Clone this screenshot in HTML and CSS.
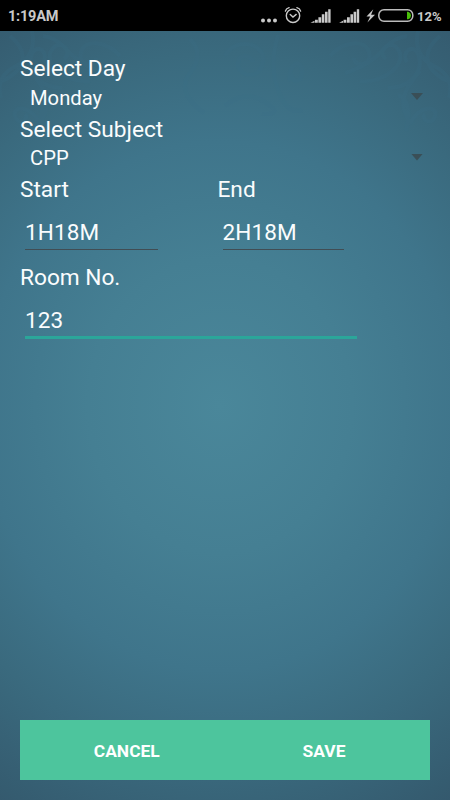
FILE: index.html
```html
<!DOCTYPE html>
<html lang="en">
<head>
<meta charset="utf-8">
<meta name="viewport" content="width=device-width, initial-scale=1">
<title>Timetable entry</title>
<link rel="stylesheet" href="styles.css">
</head>
<body>
<div class="screen">
  <header class="status">
    <span class="clock">1:19AM</span>
    <svg class="status-icons" viewBox="0 0 158 31" aria-hidden="true">
      <g fill="#c9c9c9">
        <circle cx="5" cy="20.5" r="2"/><circle cx="11" cy="20.5" r="2"/><circle cx="17" cy="20.5" r="2"/>
      </g>
      <g fill="none" stroke="#c9c9c9" stroke-width="1.4" stroke-linecap="round">
        <circle cx="35" cy="15.8" r="6.7"/>
        <path d="M32.2 14.4l2.8 2.6 3.2-2.6M27.4 11.1q.6-2.5 3.7-3.4M42.6 11.1q-.6-2.5-3.7-3.4"/>
      </g>
      <g fill="#c9c9c9">
        <path id="signal" d="M52.5 22.7l4-2v2zM57 19.8h2.8v2.9H57zM60.4 17.2h2.8v5.5h-2.8zM63.8 14.2h2.6v8.5h-2.6zM67 11.7h2.6v11H67zM70.2 9.3h2.4v13.4h-2.4z"/>
        <use href="#signal" x="28.6"/>
        <path d="M115.3 9.2l-6.8 7.4h3.7l-2.8 5.9 7.6-7.7h-3.9z"/>
      </g>
      <rect x="120.8" y="9.7" width="34" height="11.6" rx="5.2" fill="none" stroke="#bcbcbc" stroke-width="1.5"/>
      <path d="M149 11.8h1.3q2.7 1 2.7 3.7t-2.7 3.8H149z" fill="#49bf09"/>
    </svg>
    <span class="percent">12%</span>
  </header>
  <main class="content">
    <svg class="ornament" viewBox="0 0 450 130" aria-hidden="true">
      <g id="scroll" fill="none">
        <path d="M330 25c12-14 35-18 39-4s-15 16-15 6M345 42q25-8 37-22t25-15M360 50c24 2 46-16 39-30s-24 0-13 8M388 57c21 0 35-15 31-31s-19-5-12 5M418 0q-5 25 16 35t15 32M420 40c-18 20-22 35-10 51 M398 64q15 5 8 36M410 93c9-19 28-19 25-8s-15 3-10-2M440 5c-20 16-15 35 8 45"/>
      </g>
      <use href="#scroll" transform="translate(450) scale(-1 1)"/>
      <path fill="none" d="M225 25c8-18 40-15 38 5s-25 16-25 3 15-7 15-2M278 4q-9 30 0 55t24 20M290 50c-2-20 13-22 12-9s-11 10-10 2M225 75q20-17 40-4t-3 12M190 8q15 15 0 34t14 40"/>
    </svg>
    <form class="form">
      <div class="label">Select Day</div>
      <div class="spinner"><span>Monday</span><i class="arrow"></i></div>
      <div class="label">Select Subject</div>
      <div class="spinner"><span>CPP</span><i class="arrow"></i></div>
      <div class="times">
        <div class="start"><div class="label">Start</div><div class="field">1H18M</div></div>
        <div class="end"><div class="label">End</div><div class="field">2H18M</div></div>
      </div>
      <div class="room"><div class="label">Room No.</div><div class="field focused">123</div></div>
    </form>
    <footer class="actions"><span class="action cancel">CANCEL</span><span class="action save">SAVE</span></footer>
  </main>
</div>
</body>
</html>
```
FILE: styles.css
```css
* { box-sizing: border-box; }
body { margin: 0; font-family: Roboto, "Liberation Sans", sans-serif; color: #fafcfd; }
.screen { width: 450px; height: 800px; display: flex; flex-direction: column; overflow: hidden; }
.status { height: 31px; flex: none; display: flex; align-items: center; background: #000; color: #c9c9c9; padding: 1px 8px 0; font-weight: 700; }
.clock { font-size: 14.5px; letter-spacing: -.2px; }
.status-icons { width: 158px; height: 31px; margin: -1px 0 0 auto; }
.percent { font-size: 13px; width: 25px; margin-left: 1px; }
.content {
  position: relative; flex: 1; display: flex; flex-direction: column; justify-content: space-between;
  padding: 21px 20px 20px;
  background: radial-gradient(ellipse 440px 490px at 220px 375px, #4a879a 0%, #457f93 30%, #3f758b 54%, #3a6a7e 72%, #355c70 92%, #34566b 100%);
}
.ornament { position: absolute; top: 0; left: 0; width: 450px; height: 130px; stroke: #3a6f88; stroke-width: 4; opacity: .18; }
.form { position: relative; }
.label { height: 30.5px; line-height: 33px; font-size: 22.7px; letter-spacing: -.02px; white-space: nowrap; }
.spinner { height: 30px; display: flex; align-items: center; justify-content: space-between; padding: 0 7px 0 10px; font-size: 20.2px; }
.arrow { width: 12px; height: 7px; background: #3a4f57; clip-path: polygon(0 0, 100% 0, 50% 100%); margin-top: -2px; }
.times { display: flex; height: 88px; }
.start { width: 197.5px; }
.start .field { width: 132.5px; }
.end .field { width: 121.5px; }
.field { height: 46px; margin-left: 5px; padding-top: 15px; font-size: 22.5px; line-height: 26px; letter-spacing: .1px; border-bottom: 1px solid #414d54; }
.field.focused { width: 331.5px; height: 47px; border-bottom: 3px solid #2ba69a; }
.actions { position: relative; height: 60px; display: flex; align-items: center; background: #4dc59d; font-size: 17.4px; font-weight: 700; color: #fff; }
.action { flex: none; text-align: center; padding-top: 2px; }
.cancel { width: 213.5px; }
.save { width: 181px; }
```
